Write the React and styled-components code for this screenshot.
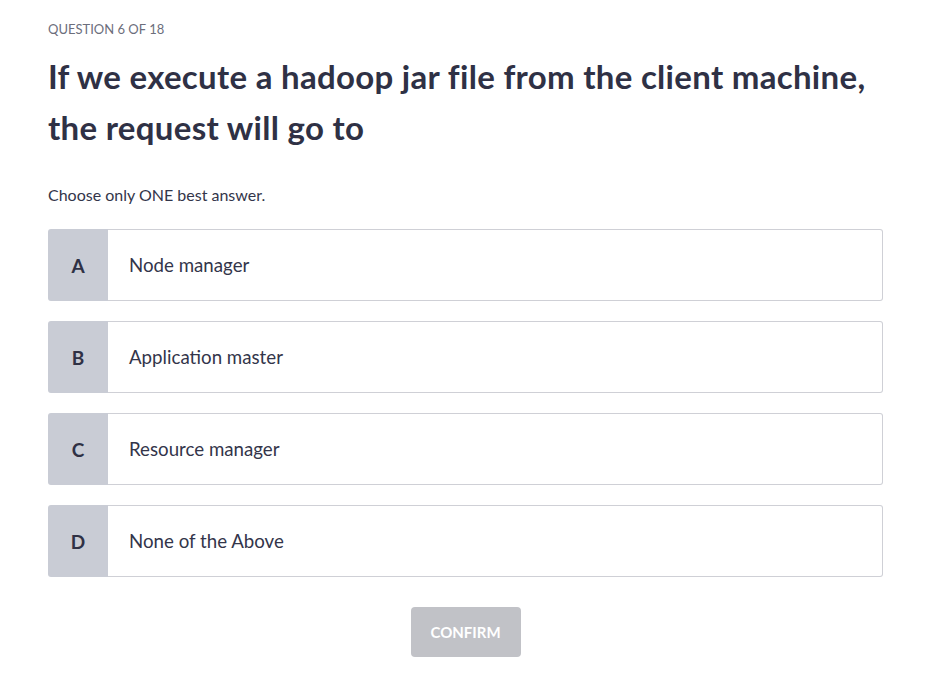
import React, { useState } from "react";
import styled, { createGlobalStyle } from "styled-components";

const GlobalStyle = createGlobalStyle`
  html, body {
    margin: 0;
    padding: 0;
    background: #ffffff;
  }
  body {
    font-family: "Lato", "Open Sans", sans-serif;
    font-variant-ligatures: none;
    color: #2f3145;
  }
`;

const Page = styled.div`
  padding: 20px 54px 20px 48px;
`;

const Counter = styled.div`
  font-size: 13px;
  line-height: 18px;
  color: #6c6e7c;
  text-transform: uppercase;
`;

const Title = styled.h1`
  margin: 13px 0 0;
  font-size: 33px;
  letter-spacing: 0.3px;
  line-height: 51px;
  font-weight: 700;
  color: #2f3145;
`;

const Hint = styled.p`
  margin: 31px 0 0;
  font-size: 16px;
  line-height: 22px;
  color: #33354a;
`;

const Options = styled.div`
  margin-top: 23px;
  display: flex;
  flex-direction: column;
  gap: 20px;
`;

const Option = styled.button`
  display: flex;
  align-items: stretch;
  height: 72px;
  padding: 0;
  border: none;
  background: #ffffff;
  font-family: inherit;
  text-align: left;
  cursor: pointer;
`;

const Letter = styled.span`
  flex: 0 0 60px;
  display: flex;
  align-items: center;
  justify-content: center;
  background: ${(p) => (p.$active ? "#3e4a8f" : "#c9ccd5")};
  color: ${(p) => (p.$active ? "#ffffff" : "#2f3145")};
  border-radius: 3px 0 0 3px;
  font-size: 19px;
  font-weight: 700;
`;

const Label = styled.span`
  flex: 1;
  display: flex;
  align-items: center;
  padding-left: 21px;
  border: 1px solid #cfd0d6;
  border-left: none;
  border-radius: 0 3px 3px 0;
  font-size: 18.7px;
  color: #33354a;
`;

const Footer = styled.div`
  display: flex;
  justify-content: center;
  margin-top: 30px;
`;

const Confirm = styled.button`
  width: 110px;
  height: 50px;
  border: none;
  border-radius: 4px;
  background: ${(p) => (p.disabled ? "#c1c2c7" : "#3e4a8f")};
  color: #ffffff;
  font-family: inherit;
  font-size: 15px;
  font-weight: 700;
  text-transform: uppercase;
`;

const answers = [
  { key: "A", text: "Node manager" },
  { key: "B", text: "Application master" },
  { key: "C", text: "Resource manager" },
  { key: "D", text: "None of the Above" },
];

export default function App() {
  const [picked, setPicked] = useState(null);

  return (
    <>
      <GlobalStyle />
      <Page>
        <Counter>Question 6 of 18</Counter>
        <Title>
          If we execute a hadoop jar file from the client machine, the request
          will go to
        </Title>
        <Hint>Choose only ONE best answer.</Hint>
        <Options>
          {answers.map((a) => (
            <Option key={a.key} onClick={() => setPicked(a.key)}>
              <Letter $active={picked === a.key}>{a.key}</Letter>
              <Label>{a.text}</Label>
            </Option>
          ))}
        </Options>
        <Footer>
          <Confirm disabled={!picked}>Confirm</Confirm>
        </Footer>
      </Page>
    </>
  );
}
